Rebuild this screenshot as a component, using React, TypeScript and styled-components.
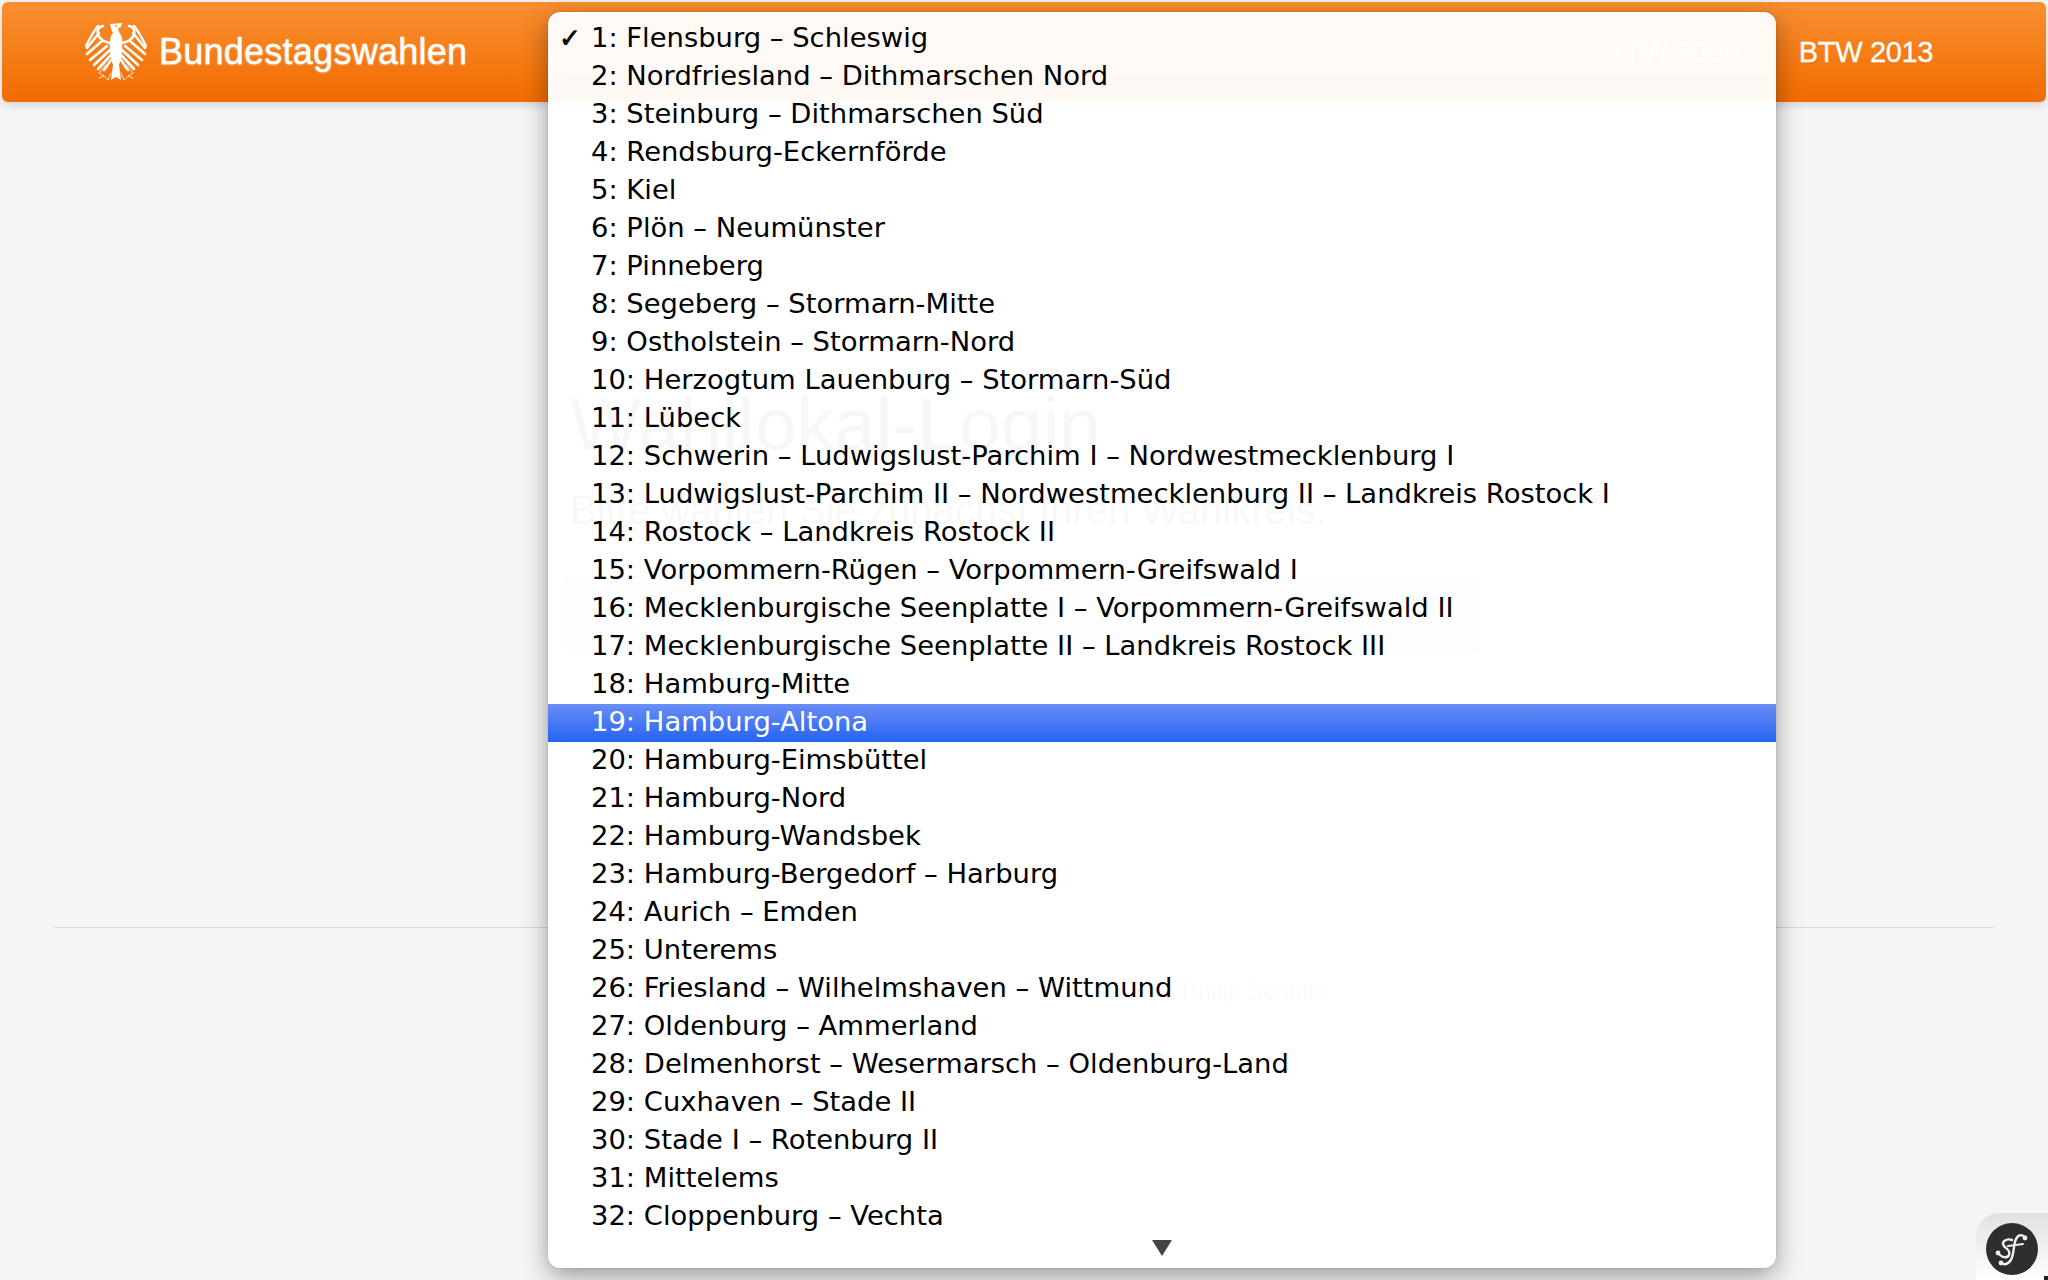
import React from "react";
import styled, { createGlobalStyle } from "styled-components";

const districts = [
  "1: Flensburg – Schleswig",
  "2: Nordfriesland – Dithmarschen Nord",
  "3: Steinburg – Dithmarschen Süd",
  "4: Rendsburg-Eckernförde",
  "5: Kiel",
  "6: Plön – Neumünster",
  "7: Pinneberg",
  "8: Segeberg – Stormarn-Mitte",
  "9: Ostholstein – Stormarn-Nord",
  "10: Herzogtum Lauenburg – Stormarn-Süd",
  "11: Lübeck",
  "12: Schwerin – Ludwigslust-Parchim I – Nordwestmecklenburg I",
  "13: Ludwigslust-Parchim II – Nordwestmecklenburg II – Landkreis Rostock I",
  "14: Rostock – Landkreis Rostock II",
  "15: Vorpommern-Rügen – Vorpommern-Greifswald I",
  "16: Mecklenburgische Seenplatte I – Vorpommern-Greifswald II",
  "17: Mecklenburgische Seenplatte II – Landkreis Rostock III",
  "18: Hamburg-Mitte",
  "19: Hamburg-Altona",
  "20: Hamburg-Eimsbüttel",
  "21: Hamburg-Nord",
  "22: Hamburg-Wandsbek",
  "23: Hamburg-Bergedorf – Harburg",
  "24: Aurich – Emden",
  "25: Unterems",
  "26: Friesland – Wilhelmshaven – Wittmund",
  "27: Oldenburg – Ammerland",
  "28: Delmenhorst – Wesermarsch – Oldenburg-Land",
  "29: Cuxhaven – Stade II",
  "30: Stade I – Rotenburg II",
  "31: Mittelems",
  "32: Cloppenburg – Vechta",
];

const GlobalStyle = createGlobalStyle`
  html, body {
    margin: 0;
    padding: 0;
    background: #f5f5f5;
    font-family: "Liberation Sans", Arial, sans-serif;
  }
`;

const Page = styled.div`
  position: relative;
  height: 1280px;
  overflow: hidden;
  padding-top: 2px;
  box-sizing: border-box;
`;

const Header = styled.header`
  display: flex;
  align-items: center;
  height: 100px;
  margin: 0 2px;
  padding: 0 113px 0 83px;
  border-radius: 6px;
  background: linear-gradient(#f98f30, #f26b00);
  box-shadow: 0 3px 8px rgba(0, 0, 0, 0.14);
`;

const Brand = styled.div`
  display: flex;
  align-items: center;
  gap: 12px;
  color: #fff;
  font-size: 36px;
  letter-spacing: 0.25px;
  -webkit-text-stroke: 0.4px #fff;
  text-shadow: 0 1px 2px rgba(255, 255, 255, 0.45);
`;

const Nav = styled.nav`
  display: flex;
  gap: 60px;
  margin-left: auto;
`;

const NavLink = styled.span`
  color: #fff;
  font-size: 29px;
  letter-spacing: -0.35px;
  -webkit-text-stroke: 0.3px #fff;
`;

const Main = styled.main`
  padding: 284px 0 0 570px;
  color: #333;
`;

const Heading = styled.h1`
  margin: 0;
  font-size: 75px;
  line-height: 76px;
  font-weight: 400;
`;

const Lead = styled.p`
  margin: 28px 0 0;
  font-size: 40px;
  line-height: 40px;
  color: #555;
`;

const FormBox = styled.div`
  width: 916px;
  height: 76px;
  margin: 46px 0 0 -8px;
  border: 1px solid #ccc;
  border-radius: 8px;
  background: #d8d8d8;
`;

const Rule = styled.hr`
  margin: 273px 54px 0;
  border: 0;
  border-top: 1px solid #d9d9d9;
`;

const Footer = styled.footer`
  margin-top: 50px;
  padding-left: 1182px;
  color: #777;
  font-size: 24px;
`;

const Menu = styled.div`
  position: absolute;
  top: 12px;
  left: 548px;
  width: 1228px;
  height: 1256px;
  box-sizing: border-box;
  padding-top: 8px;
  border-radius: 12px;
  background: rgba(255, 255, 255, 0.96);
  box-shadow: 0 8px 26px rgba(0, 0, 0, 0.38), 0 0 1px rgba(0, 0, 0, 0.5);
  font-family: "DejaVu Sans", sans-serif;
`;

const Row = styled.div<{ $active?: boolean }>`
  position: relative;
  height: 38px;
  padding-left: 43px;
  line-height: 36px;
  font-size: 27.4px;
  white-space: nowrap;
  color: ${(p) => (p.$active ? "#fff" : "#000")};
  background: ${(p) => (p.$active ? "linear-gradient(#6a8ef5, #2463f2)" : "none")};
`;

const Check = styled.span`
  position: absolute;
  left: 11px;
  top: 0;
  font-size: 26px;
  font-weight: 700;
  -webkit-text-stroke: 0.8px #000;
`;

const ScrollArrow = styled.div`
  width: 0;
  height: 0;
  margin: 4px 0 0 604px;
  border-left: 10px solid transparent;
  border-right: 10px solid transparent;
  border-top: 16px solid #444;
`;

const DebugToggle = styled.div`
  position: absolute;
  right: 0;
  bottom: 0;
  display: flex;
  align-items: flex-end;
  width: 72px;
  height: 67px;
  box-sizing: border-box;
  padding: 0 0 5px 10px;
  border-top-left-radius: 24px;
  background: linear-gradient(#e1e1e1, #fff);

  &::after {
    content: "";
    position: absolute;
    right: 0;
    bottom: 0;
    width: 4px;
    height: 4px;
    background: #222;
  }
`;

function Eagle() {
  const Wing = (
    <g fill="none" stroke="#fff" strokeLinecap="round">
      <path d="M18 3C10 4 10 17 25 20" strokeWidth="2.6" />
      <path d="M13 3C8 9 4 17 1 23" strokeWidth="2.4" />
      <path d="M14 10L2 25" strokeWidth="2.4" />
      <path d="M17 18L2 31" strokeWidth="2.6" />
      <path d="M22 23L5 37" strokeWidth="2.6" />
      <path d="M25 27L9 42" strokeWidth="2.6" />
      <path d="M26 32L13 46" strokeWidth="2.6" />
      <path d="M26 37L19 47" strokeWidth="2.4" />
      <path d="M23 44L18 48M20 42L14 50L19 53L14 55M19 53L23 57L26 50" strokeWidth="0.8" />
    </g>
  );
  return (
    <svg width="62" height="59" viewBox="0 0 62 59" aria-hidden="true">
      {Wing}
      <g transform="matrix(-1 0 0 1 62 0)">{Wing}</g>
      <path
        fill="#fff"
        d="M25 1L37 0L36 4L33 5L34 9C37 13 38 17 37 22C38 30 36 37 34 42L36 57L31 54L26 57L28 42C26 36 24 28 25 20C25 15 26 12 28 10C26 7 26 4 25 1Z"
      />
      <circle cx="31" cy="3" r="0.9" fill="#f58420" />
    </svg>
  );
}

function SymfonyLogo() {
  return (
    <svg width="52" height="52" viewBox="0 0 52 52" aria-hidden="true">
      <circle cx="26" cy="26" r="26" fill="#2f2d2f" />
      <g fill="none" stroke="#eee" strokeLinecap="round">
        <path d="M26 17C20 15 15 19 18 23C20 26 25 27 23 32C22 35 17 35 14 32" strokeWidth="2.4" />
        <path d="M39 14C32 9 29 16 28 24C27 32 26 39 20 41C17 42 15 40 14 39" strokeWidth="2.4" />
        <path d="M22 23L37 21" strokeWidth="2" />
      </g>
      <circle cx="39" cy="15" r="2.4" fill="#eee" />
      <circle cx="12" cy="30" r="2.4" fill="#eee" />
      <circle cx="15" cy="40" r="2.4" fill="#eee" />
    </svg>
  );
}

export default function App() {
  return (
    <Page>
      <GlobalStyle />
      <Header>
        <Brand>
          <Eagle />
          Bundestagswahlen
        </Brand>
        <Nav>
          <NavLink>BTW 2009</NavLink>
          <NavLink>BTW 2013</NavLink>
        </Nav>
      </Header>
      <Main>
        <Heading>Wahllokal-Login</Heading>
        <Lead>Bitte wählen Sie zunächst Ihren Wahlkreis.</Lead>
        <FormBox />
      </Main>
      <Rule />
      <Footer>Philip Schulte</Footer>
      <DebugToggle>
        <SymfonyLogo />
      </DebugToggle>
      <Menu>
        {districts.map((name, i) => (
          <Row key={name} $active={i === 18}>
            {i === 0 && <Check>✓</Check>}
            {name}
          </Row>
        ))}
        <ScrollArrow />
      </Menu>
    </Page>
  );
}
